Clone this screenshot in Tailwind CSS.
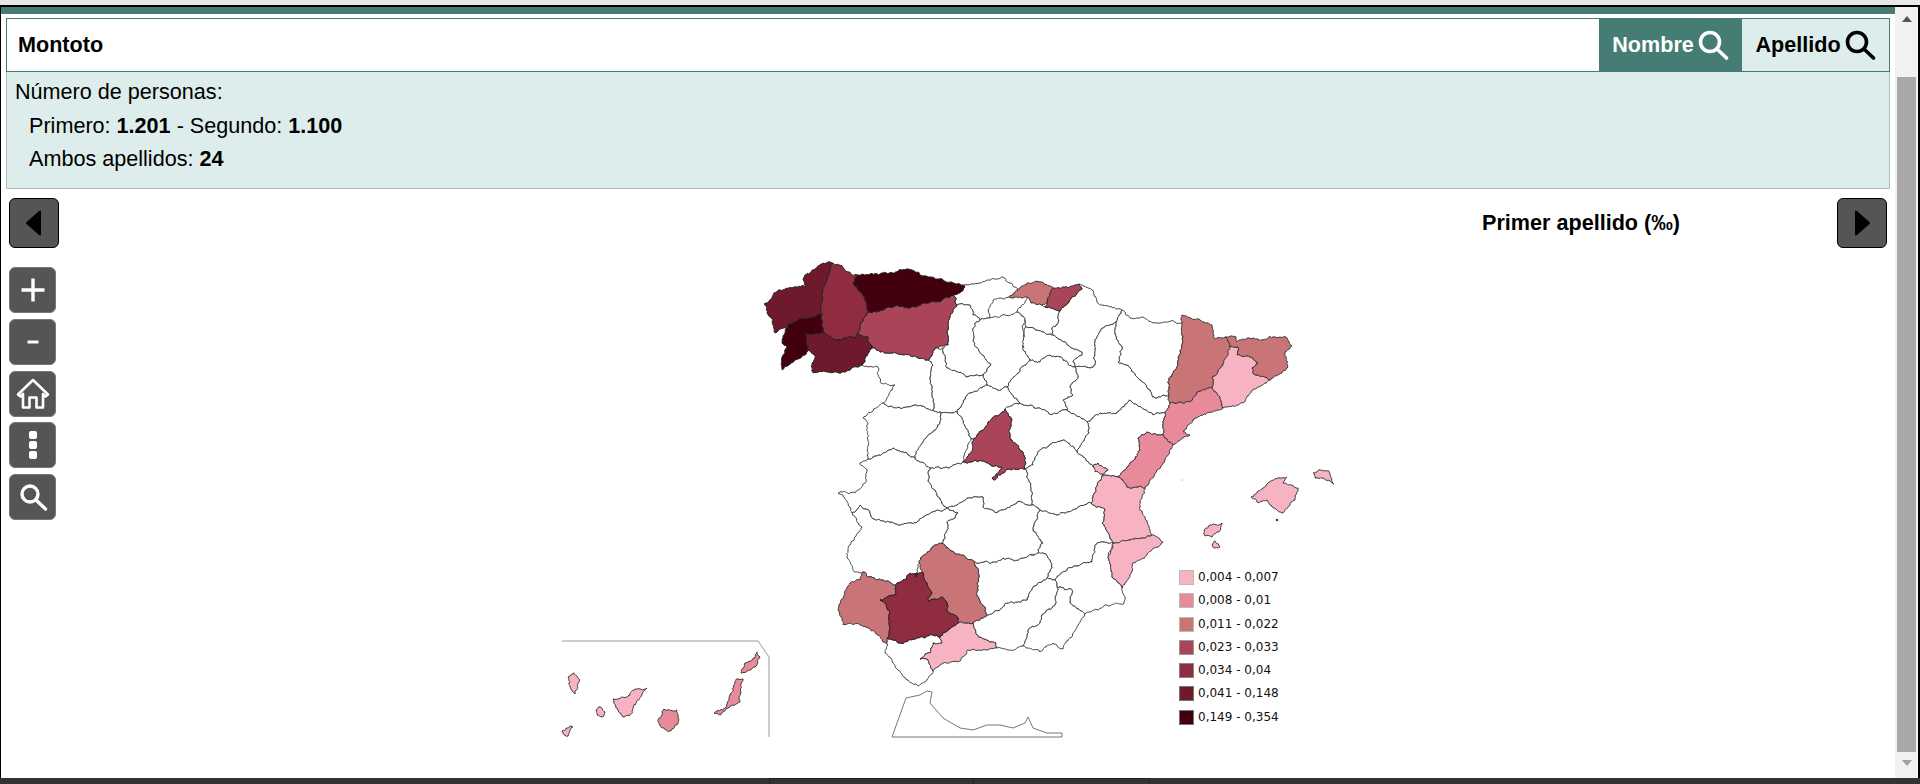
<!DOCTYPE html>
<html lang="es">
<head>
  <meta charset="UTF-8" />
  <title>Apellidos</title>
  <script src="https://cdn.jsdelivr.net/npm/@tailwindcss/browser@4"></script>
</head>
<body class="bg-white text-black overflow-hidden">
<div class="relative w-[1920px] h-[784px] flex flex-col font-['Liberation_Sans',Arial,sans-serif]">
  <div class="h-[5px] bg-[#e8e8e8]"></div>
  <div class="flex-1 flex min-h-0 border-t-2 border-l border-r-2 border-black">
    <!-- Contenido -->
    <div class="flex-1 min-w-0 flex flex-col">
      <div class="h-[7px] bg-[#457d74]"></div>
      <div class="mt-1 mx-[5px]">
        <div class="flex h-[54px] border border-[#457d74]">
          <input type="text" value="Montoto" class="flex-1 min-w-0 pl-[11px] pr-3 font-bold text-[21.6px] outline-none bg-white" />
          <button class="w-[143px] flex items-center justify-center gap-[3px] bg-[#457d74] text-white font-bold text-[21.6px]">
            Nombre
            <svg width="32" height="32" viewBox="0 0 32 32" fill="none" stroke="currentColor" stroke-width="3.6" stroke-linecap="round"><circle cx="13" cy="13" r="9.5"/><path d="M20 20l9.5 9"/></svg>
          </button>
          <button class="w-[147px] flex items-center justify-center gap-[3px] bg-[#ddedeb] font-bold text-[21.6px]">
            Apellido
            <svg width="32" height="32" viewBox="0 0 32 32" fill="none" stroke="currentColor" stroke-width="3.6" stroke-linecap="round"><circle cx="13" cy="13" r="9.5"/><path d="M20 20l9.5 9"/></svg>
          </button>
        </div>
        <div class="h-[117px] bg-[#ddedeb] border border-t-0 border-[#aabfbc] pl-[8px] pt-[3px] text-[21.6px] leading-[33.5px]">
          <div>Número de personas:</div>
          <div class="pl-[14px]">Primero: <b>1.201</b> - Segundo: <b>1.100</b></div>
          <div class="pl-[14px]">Ambos apellidos: <b>24</b></div>
        </div>
      </div>

      <div class="relative z-10 mt-[9px] ml-2 mr-2 flex items-center">
        <button class="w-[50px] h-[50px] flex items-center justify-center bg-[#555] border border-black rounded-md">
          <svg width="18" height="26" viewBox="0 0 18 26"><path d="M15 1.5v23L2 13z" fill="#000" stroke="#000" stroke-width="2" stroke-linejoin="round"/></svg>
        </button>
        <div class="ml-auto mr-[157px] font-bold text-[21.6px] leading-[24px]">Primer apellido (‰)</div>
        <button class="w-[50px] h-[50px] flex items-center justify-center bg-[#555] border border-black rounded-md">
          <svg width="18" height="26" viewBox="0 0 18 26"><path d="M3 1.5v23L16 13z" fill="#000" stroke="#000" stroke-width="2" stroke-linejoin="round"/></svg>
        </button>
      </div>

      <div class="relative z-10 mt-[19px] ml-2 flex flex-col gap-[5.75px] w-[47px]">
        <button class="h-[46px] flex items-center justify-center bg-[#555] border border-[#777] rounded-md">
          <svg width="26" height="26" viewBox="0 0 26 26" stroke="#fff" stroke-width="3.4"><path d="M13 1.5v23M1.5 13h23"/></svg>
        </button>
        <button class="h-[46px] flex items-center justify-center bg-[#555] border border-[#777] rounded-md">
          <svg width="14" height="6" viewBox="0 0 14 6" stroke="#fff" stroke-width="3"><path d="M1.5 3h11"/></svg>
        </button>
        <button class="h-[46px] flex items-center justify-center bg-[#555] border border-[#777] rounded-md">
          <svg width="34" height="32" viewBox="0 0 34 32" fill="none" stroke="#fff" stroke-width="2.6" stroke-linejoin="round"><path d="M17 2L2 16.5 4.5 18.5 7 16V29.5H13.5V19.5H20.5V29.5H27V16L29.5 18.5 32 16.5z"/></svg>
        </button>
        <button class="h-[46px] flex flex-col items-center justify-center gap-[2px] bg-[#555] border border-[#777] rounded-md">
          <span class="w-2 h-2 bg-white rounded-[2px]"></span>
          <span class="w-2 h-2 bg-white rounded-[2px]"></span>
          <span class="w-2 h-2 bg-white rounded-[2px]"></span>
        </button>
        <button class="h-[46px] flex items-center justify-center bg-[#555] border border-[#777] rounded-md">
          <svg width="30" height="30" viewBox="0 0 30 30" fill="none" stroke="#fff" stroke-width="3.4" stroke-linecap="round"><circle cx="12" cy="12" r="8"/><path d="M18 18l9.5 9"/></svg>
        </button>
      </div>
    </div>

    <!-- Barra de scroll -->
    <div class="w-[23px] bg-[#f1f1f1] flex flex-col items-center">
      <div class="mt-[9px] w-0 h-0 border-x-[5px] border-x-transparent border-b-[6px] border-b-[#555]"></div>
      <div class="mt-[55px] w-[19px] h-[675px] bg-[#a8a8a8]"></div>
      <div class="mt-[8px] w-0 h-0 border-x-[5px] border-x-transparent border-t-[6px] border-t-[#a0a0a0]"></div>
    </div>
  </div>
  <div class="h-[6px] flex bg-[#333]">
    <div class="w-[769px]"></div>
    <div class="w-[204px] border-l border-t border-[#222]"></div>
    <div class="w-[176px] border-l border-t border-[#222]"></div>
    <div class="flex-1 border-l border-[#222]"></div>
  </div>

  <!-- Mapa -->
  <svg class="absolute left-0 top-0 pointer-events-none blur-[0.3px]" width="1920" height="784" viewBox="0 0 1920 784" fill="none" stroke-width="1" stroke-linejoin="round">
    <g id="c0" class="fill-white stroke-[#444]"></g>
    <g id="c1" class="fill-[#f7b3c1] stroke-[#3a3a3a]"></g>
    <g id="c2" class="fill-[#e98a9a] stroke-[#3a3a3a]"></g>
    <g id="c3" class="fill-[#c97477] stroke-[#3a3a3a]"></g>
    <g id="c4" class="fill-[#aa4458] stroke-[#2a2a2a]"></g>
    <g id="c5" class="fill-[#8f2c40] stroke-[#222]"></g>
    <g id="c6" class="fill-[#6f1a2c] stroke-[#222]"></g>
    <g id="c7" class="fill-[#42000f] stroke-[#222]"></g>
    <path d="M892 737L906 698 920 695 927 691 932 692 930 703 943 718 960 728 973 730 987 725 1000 725 1013 728 1025 723 1028 717 1033 728 1047 733 1062 733 1062 737z" class="stroke-[#777]" />
    <path d="M562 641H758L769 657V737" class="stroke-[#999]" />
    <circle cx="1277" cy="520" r="1.2" class="fill-[#333]" />
    <circle cx="1182" cy="480" r="0.5" class="fill-[#666]" />
  </svg>

  <!-- Leyenda -->
  <div class="absolute left-[1179px] top-[570px] font-['DejaVu_Sans',sans-serif] text-[12px] text-[#111]">
    <div class="h-[23.3px] flex gap-1 items-start leading-[15px]"><span class="w-[15px] h-[15px] bg-[#f7b3c1] border border-[#bbb]"></span>0,004 - 0,007</div>
    <div class="h-[23.3px] flex gap-1 items-start leading-[15px]"><span class="w-[15px] h-[15px] bg-[#e98a9a] border border-[#bbb]"></span>0,008 - 0,01</div>
    <div class="h-[23.3px] flex gap-1 items-start leading-[15px]"><span class="w-[15px] h-[15px] bg-[#c97477] border border-[#bbb]"></span>0,011 - 0,022</div>
    <div class="h-[23.3px] flex gap-1 items-start leading-[15px]"><span class="w-[15px] h-[15px] bg-[#aa4458] border border-[#999]"></span>0,023 - 0,033</div>
    <div class="h-[23.3px] flex gap-1 items-start leading-[15px]"><span class="w-[15px] h-[15px] bg-[#8f2c40] border border-[#888]"></span>0,034 - 0,04</div>
    <div class="h-[23.3px] flex gap-1 items-start leading-[15px]"><span class="w-[15px] h-[15px] bg-[#6f1a2c] border border-[#777]"></span>0,041 - 0,148</div>
    <div class="h-[23.3px] flex gap-1 items-start leading-[15px]"><span class="w-[15px] h-[15px] bg-[#42000f] border border-[#777]"></span>0,149 - 0,354</div>
  </div>
</div>

<script>
  // provincias: [grupo de color, puntos x,y]
  const provincias = [
    [0,'964,285 980,283 1003,277 1010,283 1018,290 1009,297 993,300 988,310 990,318 980,320 973,315 970,305 957,305 953,295 963,290'],
    [0,'957,305 970,305 973,315 980,320 975,323 973,340 983,355 991,365 983,375 967,377 947,368 943,348 948,345 950,315'],
    [0,'975,323 980,320 990,318 1005,315 1017,312 1025,320 1023,328 1023,350 1030,360 1018,373 1007,387 997,390 987,385 983,375 991,365 983,355 973,340'],
    [0,'1060,311 1058,323 1052,328 1053,335 1045,333 1033,328 1025,328 1025,320 1017,312 1027,297 1032,303 1042,305 1045,307'],
    [0,'1025,328 1033,328 1045,333 1053,335 1057,338 1082,352 1082,355 1073,362 1075,367 1060,357 1050,355 1040,362 1030,360 1023,350'],
    [0,'1079,284 1092,290 1097,302 1122,310 1116,322 1103,328 1095,342 1095,365 1090,368 1075,367 1073,362 1082,355 1082,352 1057,338 1053,335 1052,328 1058,323 1060,311 1068,303 1082,288'],
    [0,'1122,310 1130,318 1143,317 1153,323 1182,323 1183,337 1178,365 1168,383 1169,395 1155,398 1150,390 1130,368 1118,362 1122,347 1115,333 1116,322'],
    [0,'1095,365 1095,342 1103,328 1116,322 1115,333 1122,347 1118,362 1130,368 1150,390 1155,398 1169,395 1170,403 1165,413 1153,415 1130,400 1117,413 1100,413 1087,422 1067,410 1063,400 1073,395 1070,387 1078,377 1075,367 1090,368'],
    [0,'1087,422 1100,413 1117,413 1130,400 1153,415 1165,413 1163,435 1147,432 1138,438 1140,450 1130,463 1118,477 1114,476 1102,476 1108,470 1098,463 1093,467 1077,452 1089,433'],
    [0,'1030,360 1040,362 1050,355 1060,357 1075,367 1078,377 1070,387 1073,395 1063,400 1067,410 1052,415 1038,408 1020,403 1007,387 1018,373'],
    [0,'1005,409 1020,403 1038,408 1052,415 1067,410 1087,422 1089,433 1077,452 1063,440 1052,443 1038,452 1033,465 1025,469 1023,452 1010,437 1012,420'],
    [0,'957,412 967,395 987,385 997,390 1007,387 1020,403 1005,409 988,422 975,438 971,439 962,418'],
    [0,'928,360 933,365 930,377 933,410 940,412 953,413 957,412 967,395 987,385 983,375 967,377 947,368 943,348 935,348'],
    [0,'862,365 872,348 887,353 910,355 928,360 933,365 930,377 933,410 915,405 900,408 883,403 895,385 880,382 878,367'],
    [0,'863,418 883,403 900,408 915,405 933,410 940,412 940,423 923,442 915,458 893,448 883,453 867,460 868,440 868,423'],
    [0,'940,412 953,413 957,412 962,418 971,439 963,462 948,468 930,468 915,458 923,442 940,423'],
    [0,'930,468 948,468 963,462 975,460 988,463 1002,467 992,478 995,480 1007,469 1025,469 1032,495 1032,505 1017,502 997,513 983,507 983,497 967,498 957,505 947,508 938,497 928,480'],
    [0,'1025,469 1033,465 1038,452 1052,443 1063,440 1077,452 1093,467 1103,474 1102,476 1093,497 1091,503 1068,512 1057,515 1040,510 1032,505 1032,495'],
    [0,'1040,510 1057,515 1068,512 1091,503 1105,510 1102,523 1113,543 1103,542 1095,545 1092,562 1068,568 1055,580 1047,578 1052,568 1050,560 1043,553 1038,553 1043,543 1033,530'],
    [0,'1055,580 1068,568 1092,562 1095,545 1103,542 1113,543 1108,558 1112,577 1122,588 1125,600 1124,603 1107,605 1085,614 1070,603 1072,590 1057,587'],
    [0,'1057,587 1072,590 1070,603 1085,614 1077,627 1063,649 1053,643 1040,652 1023,646 1028,630 1040,623 1042,615 1055,605'],
    [0,'987,615 993,613 1007,603 1027,600 1033,587 1047,578 1055,580 1057,587 1055,605 1042,615 1040,623 1028,630 1023,646 1010,650 997,648 996,643 977,635 973,623'],
    [0,'975,562 993,562 1003,558 1013,560 1027,557 1043,553 1050,560 1052,568 1047,578 1033,587 1027,600 1007,603 993,613 987,615 977,595 978,573'],
    [0,'957,505 967,498 983,497 983,507 997,513 1017,502 1032,505 1040,510 1033,530 1043,543 1038,553 1027,557 1013,560 1003,558 993,562 975,562 948,548 942,543 945,537 947,523 955,518 958,513 947,508'],
    [0,'852,513 860,505 870,512 872,518 890,522 898,525 917,522 932,512 947,508 958,513 955,518 947,523 945,537 942,543 933,547 920,560 917,573 910,573 907,578 897,583 897,586 883,580 868,577 863,572 855,572 847,557 850,545 862,527'],
    [0,'867,460 883,453 893,448 915,458 930,468 928,480 938,497 947,508 932,512 917,522 898,525 890,522 872,518 870,512 860,505 852,513 843,495 838,493 855,493 865,483 867,470 860,463'],
    [0,'888,645 887,638 900,643 923,637 933,635 940,637 942,643 933,643 930,653 920,659 928,660 933,671 927,680 918,686 908,680 898,670 892,662 885,653'],
    [1,'1225,347 1230,347 1238,347 1237,355 1250,357 1258,363 1252,368 1253,373 1270,380 1253,390 1243,403 1223,408 1220,397 1212,387 1212,377 1223,365'],
    [1,'1093,467 1098,463 1108,470 1103,474 1095,472'],
    [1,'1102,476 1114,476 1118,477 1127,487 1137,487 1145,488 1140,507 1150,530 1152,535 1130,540 1113,543 1102,523 1105,510 1091,503 1093,497'],
    [1,'1130,540 1152,535 1163,542 1147,555 1133,563 1132,572 1122,588 1112,577 1108,558 1113,547 1113,543'],
    [1,'958,623 967,623 973,623 977,635 996,643 997,648 968,650 958,662 943,663 933,671 928,660 920,659 930,653 933,643 942,643 940,637'],
    [1,'1251,497 1268,483 1280,478 1287,477 1283,483 1298,488 1295,500 1282,513 1270,505 1267,500 1257,502'],
    [1,'1313,473 1323,470 1330,473 1334,484 1323,478 1315,478'],
    [1,'1204,530 1210,525 1222,523 1218,532 1212,537 1205,536'],
    [1,'1212,545 1215,541 1220,547 1213,547'],
    [1,'568,677 573,673 579,679 575,694 570,687'],
    [1,'596,710 599,707 605,712 602,717 597,715'],
    [1,'613,699 627,697 635,689 647,688 642,694 633,707 630,715 623,717 618,710'],
    [1,'562,731 570,726 573,727 568,736 563,733'],
    [2,'1170,403 1190,402 1197,392 1212,387 1220,397 1223,408 1207,413 1195,418 1183,432 1190,435 1173,445 1163,435 1165,413'],
    [2,'1147,432 1163,435 1173,445 1163,463 1145,488 1137,487 1127,487 1118,477 1130,463 1140,450 1138,438'],
    [2,'664,709 677,710 678,723 670,731 662,728 658,720'],
    [2,'737,679 743,679 740,702 728,708 720,715 714,713 725,708 730,695'],
    [2,'741,673 745,663 755,658 757,652 760,657 757,665 747,671'],
    [3,'1009,297 1018,290 1027,283 1037,281 1053,288 1047,303 1042,305 1032,303 1027,297 1017,297'],
    [3,'1182,315 1200,320 1212,325 1214,338 1225,337 1230,347 1223,365 1212,377 1212,387 1197,392 1190,402 1170,403 1168,383 1178,365 1183,337'],
    [3,'1225,337 1235,336 1237,342 1253,338 1263,340 1273,337 1287,338 1292,346 1285,352 1288,367 1270,380 1253,373 1252,368 1258,363 1250,357 1237,355 1238,347 1230,347'],
    [3,'920,560 933,547 942,543 948,548 975,562 978,573 977,595 987,615 973,623 967,623 958,623 958,618 948,612 947,603 942,597 928,602 932,593 927,583 922,572'],
    [3,'863,572 868,577 883,580 897,586 895,595 880,600 885,603 890,613 887,638 888,645 875,632 860,625 843,625 839,606 850,583 860,580'],
    [4,'1053,288 1079,284 1082,288 1068,303 1060,311 1045,307 1047,303'],
    [4,'868,312 883,310 897,305 910,308 930,302 942,300 953,295 957,305 950,315 948,345 935,348 928,360 910,355 887,353 872,348 868,337 858,333 860,323'],
    [4,'1005,409 1012,420 1010,437 1023,452 1025,469 1007,469 995,480 992,478 1002,467 988,463 975,460 963,462 971,452 975,438 988,422'],
    [5,'832,263 840,265 852,275 858,275 853,283 865,300 868,312 860,323 858,333 855,338 838,340 823,332 822,315 822,293 827,277'],
    [5,'880,600 895,595 897,583 907,578 910,573 917,573 915,577 922,572 927,583 932,593 928,602 942,597 947,603 948,612 958,618 958,623 940,637 933,635 923,637 900,643 887,638 890,613 885,603'],
    [6,'765,303 780,290 805,287 805,275 823,263 832,263 827,277 822,293 822,315 803,318 788,325 775,333 773,320 767,313'],
    [6,'805,335 823,332 838,340 855,338 858,333 868,337 872,348 862,365 842,372 813,373 812,363 815,358 808,350'],
    [7,'853,283 858,275 883,273 908,269 923,276 964,285 963,290 953,295 942,300 930,302 910,308 897,305 883,310 868,312 865,300'],
    [7,'788,325 803,318 822,315 823,332 805,335 808,350 805,355 782,370 782,357 787,347 782,343 785,333']
  ];

  // dentado fino y determinista por arista, igual en las dos provincias que la comparten
  function ruido(a, b, s) {
    const v = Math.sin(a * 12.9898 + b * 78.233 + s * 37.719) * 43758.5453;
    return v - Math.floor(v) - 0.5;
  }
  function arista(p, q, nivel) {
    const d = Math.hypot(q[0] - p[0], q[1] - p[1]);
    if (nivel === 0 || d < 2) return [];
    const salto = ruido(p[0] + q[0], p[1] + q[1], nivel) * Math.min(d * 0.5, 2.2);
    const m = [(p[0] + q[0]) / 2 - (q[1] - p[1]) / d * salto, (p[1] + q[1]) / 2 + (q[0] - p[0]) / d * salto];
    return [...arista(p, m, nivel - 1), m, ...arista(m, q, nivel - 1)];
  }
  provincias.forEach(([grupo, puntos]) => {
    const pts = puntos.split(' ').map(t => t.split(',').map(Number));
    let d = 'M' + pts[0].join(' ');
    pts.forEach((p, i) => {
      const q = pts[(i + 1) % pts.length];
      const alreves = p[0] > q[0] || (p[0] === q[0] && p[1] > q[1]);
      const medio = alreves ? arista(q, p, 4).reverse() : arista(p, q, 4);
      medio.concat([q]).forEach(m => { d += 'L' + m[0].toFixed(1) + ' ' + m[1].toFixed(1); });
    });
    const el = document.createElementNS('http://www.w3.org/2000/svg', 'path');
    el.setAttribute('d', d + 'z');
    document.getElementById('c' + grupo).appendChild(el);
  });
</script>
</body>
</html>
